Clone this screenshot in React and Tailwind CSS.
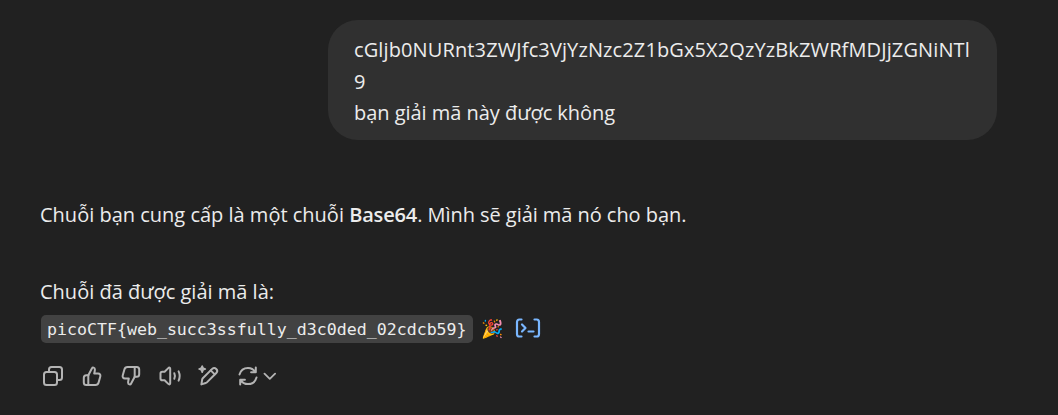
const iconProps = {
  height: 24,
  fill: "none",
  stroke: "currentColor",
  strokeWidth: 2,
  strokeLinecap: "round",
  strokeLinejoin: "round",
  className: "block shrink-0",
};

function Icon({ width = 24, children }) {
  return (
    <svg {...iconProps} width={width} viewBox={`0 0 ${width} 24`}>
      {children}
    </svg>
  );
}

function ThumbPaths() {
  return (
    <>
      <path d="M8.3 11.2 12 4.2c.5-1 2.9-1 2.9 1.400 0 1.200-.4 2.600-.7 3.900h3.900c1.700 0 2.600 1.400 2.200 2.900l-1.700 6.200c-.4 1.500-1.500 2.500-3.100 2.500H6.300c-1.500 0-2.500-1-2.500-2.500v-4.900c0-1.500 1-2.500 2.500-2.500z" />
      <path d="M8.300 11.200v9.800" />
    </>
  );
}

function Actions() {
  return (
    <div className="mt-[21px] ml-px flex items-center gap-[15px] text-[#b4b4b4]">
      <Icon>
        <rect x="3" y="8" width="13" height="13" rx="2.500" />
        <path d="M8 8V5.500C8 4 9 3 10.500 3H18.500C20 3 21 4 21 5.500v8c0 1.500-1 2.500-2.500 2.500H16" />
      </Icon>
      <Icon>
        <ThumbPaths />
      </Icon>
      <Icon>
        <g transform="rotate(180 12 12)">
          <ThumbPaths />
        </g>
      </Icon>
      <Icon>
        <path d="M4.300 7.800h2.300l3.700-3.700c.9-.9 1.900-.5 1.900.7v14.400c0 1.200-1 1.600-1.900.7l-3.700-3.700H4.300c-1 0-1.800-.8-1.800-1.800V9.600c0-1 .8-1.800 1.800-1.800z" />
        <path d="M16.300 9.200c.8 1.700.8 3.900 0 5.600M20.600 7.400c1.300 2.800 1.300 6.400 0 9.200" />
      </Icon>
      <Icon>
        <path d="m4.400 20.400.8-4.900c.1-.5.300-.9.600-1.200l9.400-9.400c2.700-2.600 6.700 1.400 4.100 4.100l-9.400 9.400c-.3.300-.7.500-1.200.6z" />
        <path d="m13.700 6.400 4 4" />
        <path d="M5.200 1.900c.3 2.300.9 2.900 3.200 3.200-2.300.3-2.900.9-3.200 3.200-.3-2.300-.9-2.900-3.200-3.200 2.300-.3 2.900-.9 3.200-3.200z" fill="currentColor" strokeWidth="1.500" />
      </Icon>
      <Icon width={40}>
        <path d="M3.500 10.500C4.600 6.600 8 3.900 12 3.900c3 0 5.700 1.500 7.300 4M19.800 3.600v4.700h-4.700M20.500 13.500c-1.100 3.900-4.500 6.600-8.500 6.600-3 0-5.700-1.500-7.300-4M4.200 20.400v-4.700h4.700" />
        <path d="m28.500 9.700 5.300 5.200 5.300-5.200" strokeWidth="1.800" />
      </Icon>
    </div>
  );
}

export default function App() {
  return (
    <main className="h-[415px] w-[1058px] overflow-hidden bg-[#212121] pt-5 pr-[61px] pl-10 font-['Open_Sans',sans-serif] text-[20px] leading-[31.500px] whitespace-nowrap text-[#ececec]">
      <div className="ml-auto h-[120px] w-[669px] rounded-[30px] bg-[#303030] pt-[14px] pl-[26px]">
        <p className="tracking-[0.120px]">cGljb0NURnt3ZWJfc3VjYzNzc2Z1bGx5X2QzYzBkZWRfMDJjZGNiNTl</p>
        <p>9</p>
        <p className="tracking-[-0.030px]">bạn giải mã này được không</p>
      </div>
      <p className="mt-[57px] h-[35px] leading-[35px]">
        Chuỗi bạn cung cấp là một chuỗi <strong className="font-semibold tracking-[-0.150px]">Base64</strong>
        <span className="tracking-[-0.050px]">. Mình sẽ giải mã nó cho bạn.</span>
      </p>
      <p className="mt-[42px] h-[35px] leading-[35px]">Chuỗi đã được giải mã là:</p>
      <div className="mt-[6px] ml-px flex h-7 items-center">
        <code className="h-7 w-[432px] rounded-[5px] bg-[#424242] pl-[6px] font-['DejaVu_Sans_Mono',monospace] text-[16.600px] leading-[29px] text-[#ececec]">
          {"picoCTF{web_succ3ssfully_d3c0ded_02cdcb59}"}
        </code>
        <span className="ml-[8px] w-6 text-[18px] leading-[26px] -translate-y-px">🎉</span>
        <svg width="26" height="20" viewBox="0 0 26 20" fill="none" stroke="#7ab7ff" strokeWidth="2.200" strokeLinecap="round" strokeLinejoin="round" className="ml-[10px] block -translate-y-px">
          <path d="M6.500 1.500H4.300C2.900 1.500 2 2.600 2 4.100v11.800c0 1.500.9 2.600 2.300 2.600h2.200M19.500 1.500h2.200c1.400 0 2.300 1.100 2.300 2.600v11.800c0 1.500-.9 2.600-2.300 2.600h-2.200M7 6.500l3.500 3.500L7 13.500M13.500 13.500h5" />
        </svg>
      </div>
      <Actions />
    </main>
  );
}
